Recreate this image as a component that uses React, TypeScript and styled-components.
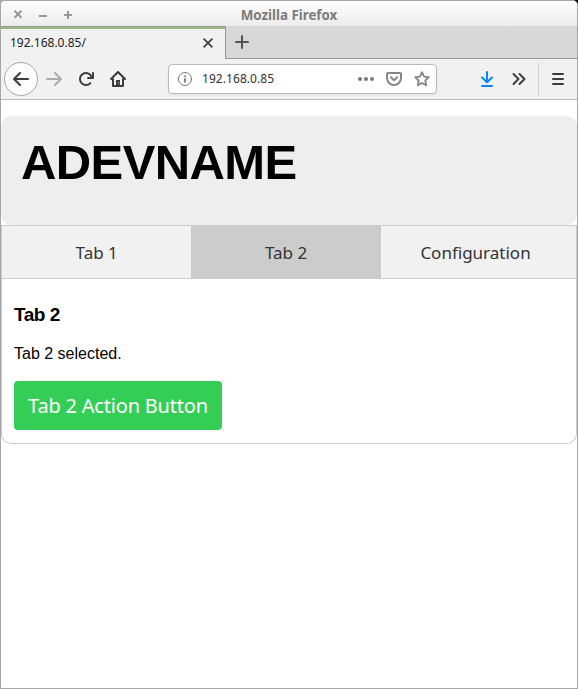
import React from "react";
import styled, { createGlobalStyle } from "styled-components";

const GlobalStyle = createGlobalStyle`
  *, *::before, *::after { box-sizing: border-box; }
  html, body { margin: 0; padding: 0; background: #a6a6a6; overflow: hidden; }
  h1, h3, p { margin: 0; }
  button { font: inherit; border: 0; padding: 0; margin: 0; background: none; color: inherit; }
`;

const Desktop = styled.div`
  width: 578px;
  height: 689px;
  background: linear-gradient(to right, #a6a6a6 50%, #000 50%) 0 0 / 100% 5px no-repeat #a6a6a6;
`;

const Window = styled.div`
  display: flex;
  flex-direction: column;
  width: 578px;
  height: 689px;
  border: 1px solid #a6a6a6;
  border-radius: 5px 5px 0 0;
  background: #fff;
  overflow: hidden;
`;

const TitleBar = styled.header`
  display: grid;
  grid-template-columns: 80px 1fr 80px;
  align-items: center;
  flex: none;
  height: 25px;
  background: linear-gradient(#fefefe, #ececec);
  color: #7c7c7c;
  font: bold 13px/25px "Noto Sans", sans-serif;
`;

const WindowControls = styled.div`
  display: flex;
  gap: 13px;
  padding-left: 11px;
  svg { display: block; }
`;

const WindowTitle = styled.div`
  text-align: center;
  padding-top: 2px;
  font-size: 13.33px;
`;

const TabStrip = styled.div`
  display: flex;
  flex: none;
  height: 33px;
  background: #d8d8d8;
`;

const BrowserTab = styled.div`
  display: flex;
  align-items: center;
  justify-content: space-between;
  width: 225px;
  padding: 0 12px 0 9px;
  border-top: 1px solid #999;
  border-right: 1px solid #999;
  background: #f1f1f1;
  box-shadow: inset 0 2px #9ab87c;
  color: #222;
  font: 12px/16px "Noto Sans", sans-serif;
`;

const StripRest = styled.div`
  flex: 1;
  display: flex;
  align-items: center;
  padding-left: 8px;
  border-bottom: 1px solid #999;
`;

const Toolbar = styled.div`
  display: flex;
  align-items: center;
  flex: none;
  height: 41px;
  padding: 0 0 0 3px;
  border-bottom: 1px solid #bababa;
  background: #f1f1f1;
`;

const BackButton = styled.button`
  display: grid;
  place-items: center;
  width: 34px;
  height: 34px;
  border: 1px solid #a9a9a9;
  border-radius: 50%;
  background: #fdfdfd;
`;

const ToolButton = styled.button<{ $gap: number }>`
  display: block;
  margin-left: ${(p) => p.$gap}px;
  svg { display: block; }
`;

const AddressBar = styled.div`
  display: flex;
  align-items: center;
  width: 269px;
  height: 30px;
  margin-left: 42px;
  padding: 0 6px 0 8px;
  border: 1px solid #b9b9b9;
  border-radius: 4px;
  background: #fff;
  box-shadow: 0 1px 3px rgba(0, 0, 0, 0.07);
  color: #333;
  font: 12px/16px "Noto Sans", sans-serif;
`;

const Address = styled.span`
  flex: 1;
  margin-left: 9px;
  letter-spacing: 0.06px;
`;

const AddressActions = styled.div`
  display: flex;
  gap: 12px;
`;

const Divider = styled.div`
  width: 1px;
  height: 34px;
  margin-left: 11px;
  background: #d5d5d5;
`;

const Page = styled.main`
  flex: 1;
  padding-top: 16px;
  font: 16px/18px "Liberation Sans", Arial, sans-serif;
  color: #000;
`;

const Banner = styled.div`
  height: 109px;
  padding: 20px;
  border-radius: 10px;
  background: #eee;
`;

const DeviceName = styled.h1`
  font-size: 49px;
  letter-spacing: -0.6px;
  line-height: 53px;
  font-weight: bold;
`;

const PageTabs = styled.nav`
  display: flex;
  height: 54px;
  border: 1px solid #ccc;
  background: #f1f1f1;
`;

const PageTab = styled.button<{ $active?: boolean }>`
  width: 33%;
  padding-top: 1px;
  background: ${(p) => (p.$active ? "#ccc" : "#f1f1f1")};
  color: #333;
  font: 17px/24px "Noto Sans", sans-serif;
`;

const Panel = styled.section`
  height: 165px;
  padding: 25px 12px 12px;
  border: 1px solid #ccc;
  border-top: 0;
  border-radius: 0 0 10px 10px;
`;

const PanelTitle = styled.h3`
  font-size: 19px;
  letter-spacing: -0.45px;
  line-height: 21px;
`;

const PanelText = styled.p`
  margin: 20px 0 18px;
`;

const ActionButton = styled.button`
  display: block;
  width: 208px;
  height: 49px;
  border-radius: 4px;
  background: #34ce57;
  color: #fff;
  font: 20px/27px "Noto Sans", sans-serif;
  letter-spacing: -0.2px;
`;

const Icon = styled.svg.attrs({ viewBox: "0 0 16 16", width: 16, height: 16 })<{ $color?: string; $weight?: number }>`
  display: block;
  flex: none;
  fill: none;
  stroke: ${(p) => p.$color ?? "#3d3d3d"};
  stroke-width: ${(p) => p.$weight ?? 2};
  stroke-linecap: round;
  stroke-linejoin: round;
`;

const controls = [
  "M2.5 2.7l7 7M9.5 2.7l-7 7",
  "M2 8h8",
  "M2 7h8M6 3v8",
];

export default function App() {
  return (
    <>
      <GlobalStyle />
      <Desktop>
        <Window>
          <TitleBar>
            <WindowControls>
              {controls.map((d) => (
                <svg key={d} width="12" height="13" viewBox="0 0 12 13" fill="none" stroke="#969696" strokeWidth="2">
                  <path d={d} />
                </svg>
              ))}
            </WindowControls>
            <WindowTitle>Mozilla Firefox</WindowTitle>
          </TitleBar>

          <TabStrip>
            <BrowserTab>
              <span>192.168.0.85/</span>
              <svg width="10" height="10" viewBox="0 0 10 10" fill="none" stroke="#3d3d3d" strokeWidth="1.7">
                <path d="M.6.6l8.8 8.8M9.4.6L.6 9.4" />
              </svg>
            </BrowserTab>
            <StripRest>
              <Icon $color="#555"><path d="M8 2v12M2 8h12" /></Icon>
            </StripRest>
          </TabStrip>

          <Toolbar>
            <BackButton aria-label="Back">
              <Icon><path d="M15 8H1.5M7 2L1 8l6 6" /></Icon>
            </BackButton>
            <ToolButton $gap={8} aria-label="Forward">
              <Icon $color="#acacac"><path d="M1 8h13.5M9 2l6 6-6 6" /></Icon>
            </ToolButton>
            <ToolButton $gap={16} aria-label="Reload">
              <Icon>
                <path
                  fill="#3d3d3d"
                  stroke="none"
                  d="M15 1a1 1 0 0 0-1 1v2.418A6.995 6.995 0 1 0 8 15a6.954 6.954 0 0 0 4.95-2.05 1 1 0 0 0-1.414-1.414A5.019 5.019 0 1 1 12.549 6H10a1 1 0 0 0 0 2h5a1 1 0 0 0 1-1V2a1 1 0 0 0-1-1z"
                />
              </Icon>
            </ToolButton>
            <ToolButton $gap={16} aria-label="Home">
              <Icon>
                <path d="M1 8l7-7 7 7M3 8v7h10V8" />
                <path d="M6 15V9h4v6z" fill="#3d3d3d" stroke="none" />
                <path d="M8.5 11.5v1" stroke="#eee" strokeWidth="1" strokeLinecap="butt" />
              </Icon>
            </ToolButton>
            <AddressBar>
              <Icon $color="#777" $weight={1}>
                <circle cx="8" cy="8" r="6.5" />
                <path d="M8 7.2v4.3M8 4.4v1.6" strokeWidth="1.8" strokeLinecap="butt" />
              </Icon>
              <Address>192.168.0.85</Address>
              <AddressActions>
                <Icon $color="none">
                  <g fill="#777"><circle cx="2" cy="8" r="2" /><circle cx="8" cy="8" r="2" /><circle cx="14" cy="8" r="2" /></g>
                </Icon>
                <Icon $color="#868686">
                  <path d="M2 2h12a1 1 0 0 1 1 1v4A7 7 0 0 1 1 7V3a1 1 0 0 1 1-1z" />
                  <path d="M4.8 6.3L8 9.3l3.2-3" />
                </Icon>
                <Icon $color="#868686">
                  <path d="M8 1.2l2.05 4.35 4.75.65-3.5 3.3.9 4.8L8 12l-4.2 2.3.9-4.8L1.2 6.2l4.75-.65z" strokeWidth="1.8" />
                </Icon>
              </AddressActions>
            </AddressBar>
            <ToolButton $gap={42} aria-label="Downloads">
              <Icon $color="#0a84ff"><path d="M8 1v10M3 6.5L8 11.3l5-4.8M3 15h10" /></Icon>
            </ToolButton>
            <ToolButton $gap={16} aria-label="More tools">
              <Icon><path d="M2.5 3l5 5-5 5M8.5 3l5 5-5 5" /></Icon>
            </ToolButton>
            <Divider />
            <ToolButton $gap={11} aria-label="Menu">
              <Icon><path d="M3 3h10M3 8h10M3 13h10" /></Icon>
            </ToolButton>
          </Toolbar>

          <Page>
            <Banner>
              <DeviceName>ADEVNAME</DeviceName>
            </Banner>
            <PageTabs>
              <PageTab>Tab 1</PageTab>
              <PageTab $active>Tab 2</PageTab>
              <PageTab>Configuration</PageTab>
            </PageTabs>
            <Panel>
              <PanelTitle>Tab 2</PanelTitle>
              <PanelText>Tab 2 selected.</PanelText>
              <ActionButton>Tab 2 Action Button</ActionButton>
            </Panel>
          </Page>
        </Window>
      </Desktop>
    </>
  );
}
